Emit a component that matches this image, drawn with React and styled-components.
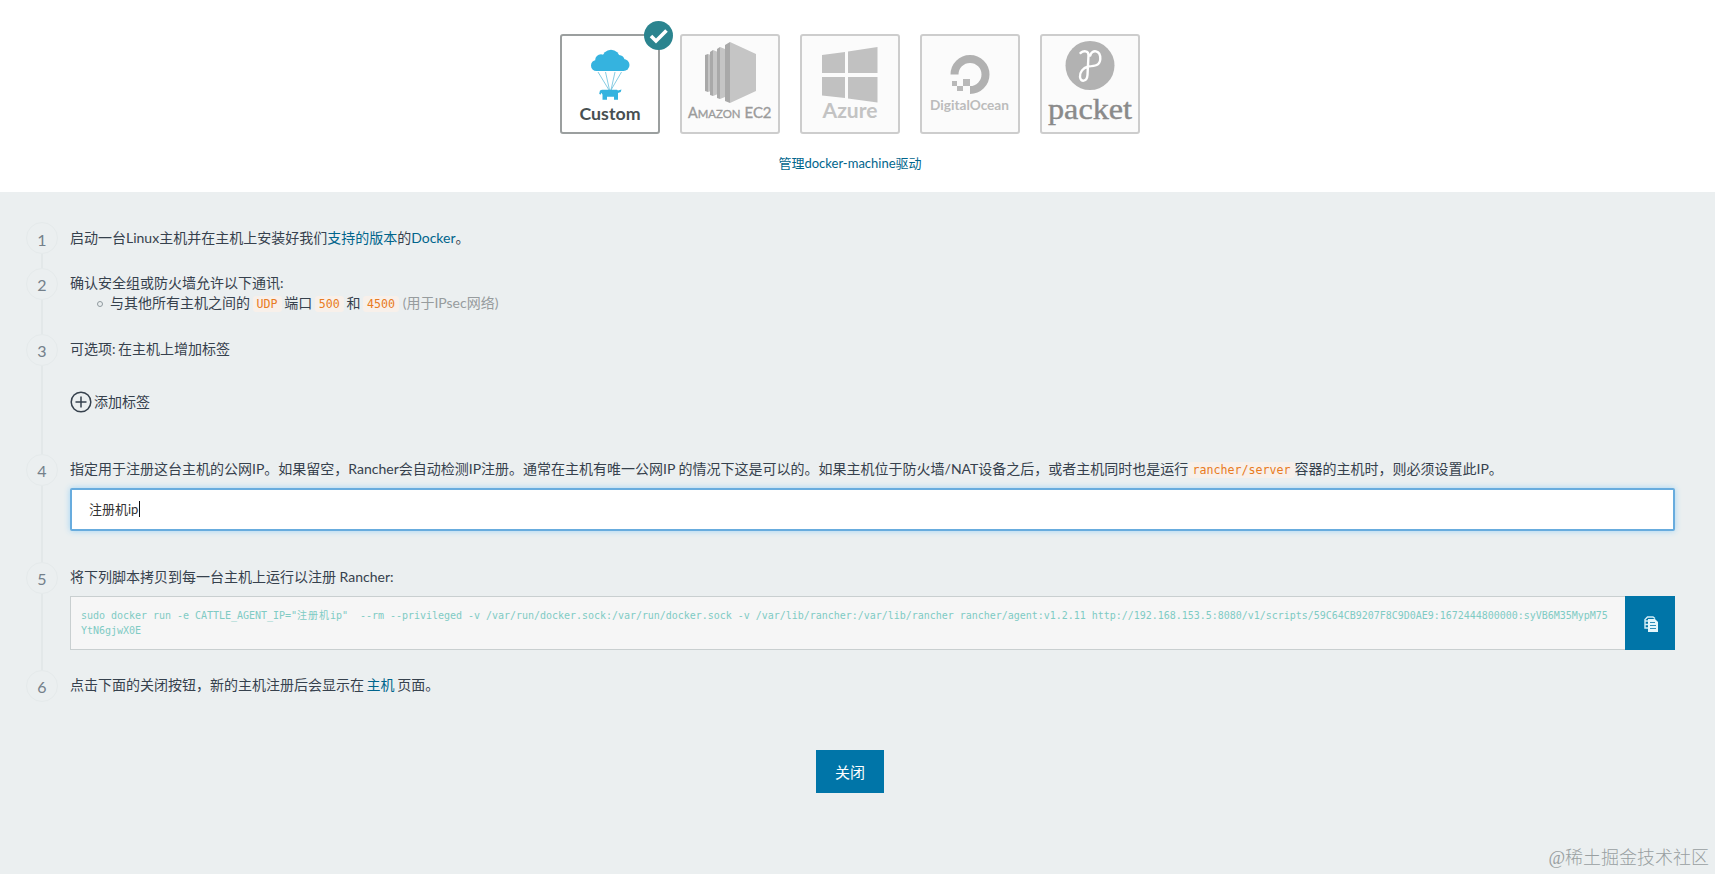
import React from "react";
import styled, { createGlobalStyle, css } from "styled-components";

const sans = `Lato, "Noto Sans CJK SC", sans-serif`;
const mono = `"DejaVu Sans Mono", "Noto Sans CJK SC", monospace`;

const GlobalStyle = createGlobalStyle`
  * { box-sizing: border-box; }
  body {
    margin: 0;
    background: #ebeff0;
    color: #36414d;
    font: 14px/20px ${sans};
    overflow: hidden;
  }
`;

const Page = styled.main`
  position: relative;
  height: 874px;
  padding-right: 15px;
  background: linear-gradient(#fff 192px, #ebeff0 192px);
`;

const DriverBar = styled.section`
  height: 192px;
  padding-top: 34px;
  display: flex;
  flex-direction: column;
  align-items: center;
`;

const DriverList = styled.div`
  display: flex;
  gap: 20px;
  margin-bottom: 19px;
`;

const DriverCard = styled.button`
  position: relative;
  width: 100px;
  height: 100px;
  padding: 0;
  border: 2px solid ${(p) => (p.$active ? "#9b9f9f" : "#cdcdcd")};
  border-radius: 3px;
  background: ${(p) => (p.$active ? "#fff" : "#fbfbfb")};

  > svg {
    display: block;
    width: 96px;
    height: 96px;
  }
`;

const CheckBadge = styled.span`
  position: absolute;
  top: -15px;
  right: -15px;
  width: 29px;
  height: 29px;
  border-radius: 50%;
  background: #2b848f;
  svg { display: block; }
`;

const Link = styled.a`
  color: #00658c;
  text-decoration: none;
`;

const ManageLink = styled(Link)`
  font-size: 13px;
`;

const Steps = styled.ol`
  list-style: none;
  margin: 0;
  padding: 30px 25px 0 26px;
`;

const Step = styled.li`
  display: flex;
  gap: 12px;
  height: ${(p) => p.$height}px;
`;

const Rail = styled.div`
  flex: none;
  width: 32px;
  display: flex;
  flex-direction: column;
  align-items: center;
  &::after {
    content: "";
    flex: 1;
    width: 2px;
    background: ${(p) => (p.$last ? "transparent" : "#e3e8e9")};
  }
`;

const StepNumber = styled.span`
  width: 32px;
  height: 32px;
  border: 1px solid #e5eaeb;
  border-radius: 50%;
  color: #74808a;
  font-size: 16px;
  line-height: ${(p) => (p.$first ? 33 : 31)}px;
  text-align: center;
`;

const StepBody = styled.div`
  flex: 1;
  min-width: 0;
  padding-top: ${(p) => (p.$first ? 6 : 5)}px;
  word-spacing: ${(p) => (p.$tight ? -1 : 0)}px;
`;

const Ports = styled.ul`
  margin: 0;
  padding-left: 27px;
  list-style: none;
`;

const Port = styled.li`
  display: flex;
  align-items: center;
  gap: 7px;
  &::before {
    content: "";
    width: 4px;
    height: 4px;
    border: 1px solid #8f999e;
    border-radius: 50%;
    margin-top: 1px;
  }
`;

const Code = styled.code`
  padding: 1px 4px;
  border-radius: 3px;
  background: #f8f0ea;
  color: #e87b22;
  font: 11.65px ${mono};
`;

const Muted = styled.span`
  margin-left: 1px;
  color: #979c9e;
`;

const AddLabel = styled.button`
  display: flex;
  align-items: center;
  gap: 2px;
  margin-top: 32px;
  padding: 0;
  border: 0;
  background: none;
  color: inherit;
  font: inherit;
`;

const IpField = styled.div`
  display: flex;
  align-items: center;
  height: 43px;
  margin-top: 9px;
  padding: 0 0 1px 17px;
  border: 2px solid #68acde;
  border-radius: 2px;
  background: #fff;
  box-shadow: 0 0 6px #9fd4f5;
  color: #333;
  font-size: 13px;
`;

const Caret = styled.span`
  width: 1px;
  height: 16px;
  margin-left: 1px;
  background: #111;
`;

const CommandRow = styled.div`
  display: flex;
  height: 54px;
  margin-top: 9px;
`;

const Command = styled.pre`
  flex: 1;
  min-width: 0;
  margin: 0;
  padding: 11px 10px;
  border: 1px solid #c9cfd0;
  border-right: 0;
  background: #f6f6f6;
  color: #7fcbc4;
  font: 10px/15px ${mono};
  letter-spacing: -0.022px;
  word-spacing: 0;
  white-space: pre;
`;

const CommandLine = styled.span`
  display: flex;
`;

const WideGlyphs = styled.span`
  letter-spacing: 1px;
`;

const solidBlue = css`
  display: flex;
  align-items: center;
  justify-content: center;
  padding: 0;
  border: 0;
  background: #0075a8;
  color: #fff;
`;

const CopyButton = styled.button`
  ${solidBlue}
  width: 50px;
  padding: 2px 0 0 3px;
`;

const Footer = styled.footer`
  display: flex;
  justify-content: center;
  margin-top: 30px;
`;

const CloseButton = styled.button`
  ${solidBlue}
  width: 68px;
  height: 43px;
  font: 15px ${sans};
`;

const Watermark = styled.div`
  position: absolute;
  right: 6px;
  bottom: 3px;
  color: #999fa1;
  font: 300 18px/26px "Liberation Serif", "Noto Sans CJK SC", serif;
`;

const CustomLogo = () => (
  <svg viewBox="0 0 96 96">
    <g fill="#35b3df">
      <circle cx="34.500" cy="29.500" r="5.500" />
      <circle cx="39" cy="24" r="5.800" />
      <circle cx="49" cy="22.500" r="8.800" />
      <circle cx="57" cy="24.500" r="5.500" />
      <circle cx="61.500" cy="29" r="6" />
      <path d="M34.500 24h27v11h-27z" />
    </g>
    <path fill="none" stroke="#68bfdc" strokeWidth="0.8" d="M36 36l11 18M43.500 36l4 18M53 36l-4 18M59.500 36L49 54" />
    <path fill="#35b3df" d="M38 54.500l2-.8h15l1 .8 3.500-.9-.8 2.400-2.700 1v6.700h-4v-3h-7v3h-4.500v-5l-1-2-1 2-1.300-1z" />
    <text x="17.500" y="84" textLength="61" lengthAdjust="spacingAndGlyphs" fontFamily="Lato" fontSize="17" fontWeight="700" fill="#474f52">Custom</text>
  </svg>
);

const Ec2Logo = () => (
  <svg viewBox="0 0 96 96">
    <path fill="#c5c5c5" d="M48 6l26 12v37L48 67zM38 11l5 2v48l-5 2zM31 14l5 2v42l-5 2zM26 18l3 1v36l-3 1z" />
    <path fill="#a9a9a9" d="M48 6v61l-5-2V9zM38 11v52l-3-1V13zM31 14v46l-3-1V16zM26 18v38l-3-1V19z" />
    <g fontFamily="Lato" fill="#9b9b9b" stroke="#9b9b9b" strokeWidth="0.350">
      <text x="6" y="81.500" fontSize="14.500" textLength="52.500" lengthAdjust="spacingAndGlyphs">A<tspan fontSize="11.500">MAZON</tspan></text>
      <text x="62.500" y="81.500" fontSize="14.500" textLength="27" lengthAdjust="spacingAndGlyphs">EC2</text>
    </g>
  </svg>
);

const AzureLogo = () => (
  <svg viewBox="0 0 96 96">
    <path fill="#c1c1c1" d="M20 19l23-3v21H20zM46 15.500L75.500 11v26H46zM20 41h23v21l-23-2.500zM46 41h29.500v25.500L46 62.500z" />
    <text x="20.500" y="82" textLength="55" lengthAdjust="spacingAndGlyphs" fontFamily="Lato" fontSize="20" fontWeight="700" fill="#c3c3c3">Azure</text>
  </svg>
);

const DigitalOceanLogo = () => (
  <svg viewBox="0 0 96 96">
    <path fill="none" stroke="#b1b1b1" strokeWidth="8" d="M32.500 38.500A15.500 15.500 0 1 1 48 54" />
    <path fill="#b9b9b9" d="M41 43h7v7h-7zM35 50h6v5h-6zM30 45h5v5h-5z" />
    <text x="8" y="74" textLength="79" lengthAdjust="spacingAndGlyphs" fontFamily="Lato" fontSize="13" fontWeight="700" fill="#bcbcbc">DigitalOcean</text>
  </svg>
);

const PacketLogo = () => (
  <svg viewBox="0 0 96 96">
    <circle cx="48" cy="29.500" r="24.500" fill="#b2b2b2" />
    <path fill="none" stroke="#fff" strokeWidth="2.400" strokeLinecap="round" d="M38.500 17c3-2.500 8-2.500 8 2l-1 20c-.5 7-7 7.500-7.500 2-.3-5 3-9 8-10.500 7-.5 12-1 12.300-7.500.3-9-8.500-10-10-3.500" />
    <text x="6" y="82.500" textLength="84" lengthAdjust="spacingAndGlyphs" fontFamily="Liberation Serif" fontSize="29" fill="#8a8a8a" stroke="#8a8a8a" strokeWidth="0.400">packet</text>
  </svg>
);

const CopyIcon = () => (
  <svg width="15" height="16" viewBox="0 0 15 16">
    <path fill="none" stroke="#d3edf6" strokeWidth="1.400" d="M4 12H1V3.500L3.500 1H9l2 1.500M1 5h3M1 8.500h3" />
    <path fill="#e4f6fb" d="M4 3h7l3 3v10H4z" />
    <path stroke="#2f8fba" strokeWidth="1" d="M6 6.500h5M6 9.500h6M6 12.500h6" />
  </svg>
);

const StepItem = ({ n, height, last, loose, children }) => (
  <Step $height={height}>
    <Rail $last={last}>
      <StepNumber $first={n === 1}>{n}</StepNumber>
    </Rail>
    <StepBody $first={n === 1} $tight={!loose}>{children}</StepBody>
  </Step>
);

const drivers = [CustomLogo, Ec2Logo, AzureLogo, DigitalOceanLogo, PacketLogo];

export default function App() {
  return (
    <Page>
      <GlobalStyle />
      <DriverBar>
        <DriverList>
          {drivers.map((Logo, i) => (
            <DriverCard key={i} $active={i === 0}>
              <Logo />
              {i === 0 && (
                <CheckBadge>
                  <svg width="29" height="29" viewBox="0 0 29 29">
                    <path d="M7 15l5 5L22.500 9.500" fill="none" stroke="#fff" strokeWidth="3.600" />
                  </svg>
                </CheckBadge>
              )}
            </DriverCard>
          ))}
        </DriverList>
        <ManageLink>管理docker-machine驱动</ManageLink>
      </DriverBar>

      <Steps>
        <StepItem n={1} height={46}>
          启动一台Linux主机并在主机上安装好我们<Link>支持的版本</Link>的<Link>Docker</Link>。
        </StepItem>
        <StepItem n={2} height={66}>
          确认安全组或防火墙允许以下通讯:
          <Ports>
            <Port>
              <span>
                与其他所有主机之间的 <Code>UDP</Code> 端口 <Code>500</Code> 和 <Code>4500</Code>{" "}
                <Muted>(用于IPsec网络)</Muted>
              </span>
            </Port>
          </Ports>
        </StepItem>
        <StepItem n={3} height={120}>
          可选项: 在主机上增加标签
          <AddLabel>
            <svg width="22" height="22" viewBox="0 0 22 22" fill="none" stroke="#36414d" strokeWidth="1.500">
              <circle cx="11" cy="11" r="9.800" />
              <path d="M11 5.500v11M5.500 11h11" />
            </svg>
            添加标签
          </AddLabel>
        </StepItem>
        <StepItem n={4} height={108} loose>
          指定用于注册这台主机的公网IP。如果留空，Rancher会自动检测IP注册。通常在主机有唯一公网IP 的情况下这是可以的。如果主机位于防火墙/NAT设备之后，或者主机同时也是运行<Code>rancher/server</Code>容器的主机时，则必须设置此IP。
          <IpField>
            注册机ip
            <Caret />
          </IpField>
        </StepItem>
        <StepItem n={5} height={108} loose>
          将下列脚本拷贝到每一台主机上运行以注册 Rancher:
          <CommandRow>
            <Command>
              <CommandLine>
                <span>{'sudo docker run -e CATTLE_AGENT_IP="'}</span>
                <WideGlyphs>注册机</WideGlyphs>
                <span>
                  {'ip"  --rm --privileged -v /var/run/docker.sock:/var/run/docker.sock -v /var/lib/rancher:/var/lib/rancher rancher/agent:v1.2.11 http://192.168.153.5:8080/v1/scripts/59C64CB9207F8C9D0AE9:1672444800000:syVB6M35MypM75'}
                </span>
              </CommandLine>
              <CommandLine>YtN6gjwX0E</CommandLine>
            </Command>
            <CopyButton aria-label="copy">
              <CopyIcon />
            </CopyButton>
          </CommandRow>
        </StepItem>
        <StepItem n={6} height={50} last>
          点击下面的关闭按钮，新的主机注册后会显示在 <Link>主机</Link> 页面。
        </StepItem>
      </Steps>

      <Footer>
        <CloseButton>关闭</CloseButton>
      </Footer>
      <Watermark>@稀土掘金技术社区</Watermark>
    </Page>
  );
}
